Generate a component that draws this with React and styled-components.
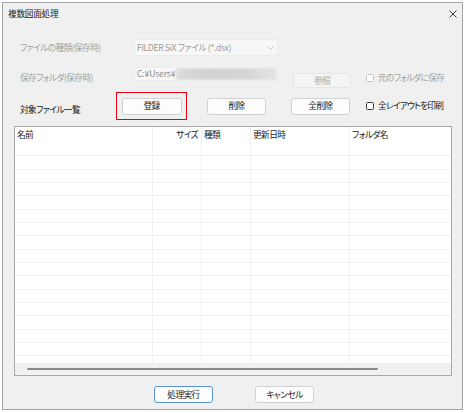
import React from 'react';
import styled, { createGlobalStyle } from 'styled-components';

const GlobalStyle = createGlobalStyle`
  html, body {
    margin: 0;
    padding: 0;
    background: #ffffff;
  }
  * {
    box-sizing: border-box;
  }
`;

const Window = styled.div`
  margin: 2px 0 0 2px;
  width: 461px;
  height: 408px;
  border: 1px solid #a4a4a4;
  background: #f0f0f0;
  display: flex;
  flex-direction: column;
  font-family: 'Noto Sans CJK JP', 'Noto Sans', sans-serif;
  font-feature-settings: 'palt';
  font-size: 8.7px;
  letter-spacing: -0.6px;
  line-height: 12px;
  color: #1a1a1a;
`;

const TitleBar = styled.div`
  height: 22px;
  flex: none;
  display: flex;
  align-items: center;
  justify-content: space-between;
  padding: 0 5px 0 5px;
`;

const Title = styled.span`
  letter-spacing: -0.3px;
  color: #1a1a1a;
`;

const CloseIcon = () => (
  <svg width="8" height="8" viewBox="0 0 8 8">
    <path d="M0.5 0.5 L7.5 7.5 M7.5 0.5 L0.5 7.5" stroke="#3a3a3a" strokeWidth="1" />
  </svg>
);

const FormRow = styled.div`
  display: flex;
  align-items: center;
  height: ${p => p.$h}px;
  margin-top: ${p => p.$mt}px;
  padding-left: 17px;
  flex: none;
`;

const Label = styled.span`
  width: ${p => p.$w}px;
  flex: none;
  color: ${p => (p.$disabled ? '#a3a3a3' : '#1a1a1a')};
  white-space: nowrap;
  align-self: ${p => p.$self || 'center'};
  margin-bottom: ${p => p.$mb || 0}px;
`;

const Select = styled.div`
  width: 144px;
  height: 17px;
  background: #f7f7f7;
  border: 1px solid #ececec;
  display: flex;
  align-items: center;
  justify-content: space-between;
  padding: 0 3px 0 2px;
  color: #9c9c9c;
  letter-spacing: -0.4px;
  white-space: nowrap;
`;

const Chevron = () => (
  <svg width="7" height="4" viewBox="0 0 7 4">
    <path d="M0.5 0.5 L3.5 3.5 L6.5 0.5" stroke="#c2c2c2" strokeWidth="0.9" fill="none" />
  </svg>
);

const PathInput = styled.div`
  width: 144px;
  height: 14px;
  align-self: flex-start;
  background: #f7f7f7;
  border: 1px solid #ececec;
  display: flex;
  align-items: center;
  padding-left: 2px;
  color: #8e8e8e;
  letter-spacing: -0.2px;
  white-space: nowrap;
  overflow: hidden;
`;

const Redacted = styled.span`
  flex: 1;
  height: 12px;
  margin-left: 1px;
  background: linear-gradient(90deg, #dcdcdc, #d3d3d3 30%, #d6d6d6 70%, #e4e4e4);
  filter: blur(0.8px);
`;

const Button = styled.button`
  width: ${p => p.$w}px;
  height: ${p => p.$h || 17}px;
  margin-left: ${p => p.$ml || 0}px;
  align-self: ${p => p.$self || 'center'};
  flex: none;
  padding: 0;
  font: inherit;
  letter-spacing: inherit;
  border-radius: 3px;
  background: ${p => (p.disabled ? '#f4f4f4' : '#fdfdfd')};
  border: 1px solid ${p => (p.$default ? '#5b93d6' : p.disabled ? '#e6e6e6' : '#d2d2d2')};
  color: ${p => (p.disabled ? '#a6a6a6' : '#1a1a1a')};
  display: flex;
  align-items: center;
  justify-content: center;
`;

const Highlight = styled.div`
  width: 71px;
  height: 28px;
  flex: none;
  border: 1px solid #e60012;
  display: flex;
  align-items: center;
  justify-content: center;
`;

const CheckLabel = styled.label`
  display: flex;
  align-items: center;
  gap: 4px;
  margin-left: ${p => p.$ml}px;
  color: ${p => (p.$disabled ? '#a3a3a3' : '#1a1a1a')};
  letter-spacing: -0.75px;
  white-space: nowrap;
`;

const Box = styled.span`
  width: 8px;
  height: 8px;
  flex: none;
  border: 1px solid ${p => (p.$disabled ? '#c6c6c6' : '#3a3a3a')};
  border-radius: 1.5px;
  background: #fdfdfd;
`;

const TableFrame = styled.div`
  margin: 6px 0 0 11px;
  width: 438px;
  height: 250px;
  flex: none;
  border: 1px solid #a8a8a8;
  background: #ffffff;
  display: flex;
  flex-direction: column;
`;

const Rows = styled.div`
  flex: 1;
  overflow: hidden;
`;

const GridRow = styled.div`
  display: grid;
  grid-template-columns: 138px 49px 49px 99px 1fr;
  height: ${p => (p.$header ? '16px' : '13.333px')};
  border-bottom: ${p => (p.$header ? 'none' : '1px solid #f1f1f1')};
`;

const Cell = styled.div`
  border-right: ${p => (p.$last ? 'none' : '1px solid #f1f1f1')};
  text-align: ${p => p.$align || 'left'};
  padding: ${p => (p.$align === 'right' ? '0 3px 0 0' : '0 0 0 2px')};
  line-height: 16px;
  white-space: nowrap;
  overflow: hidden;
`;

const ScrollTrack = styled.div`
  height: 12px;
  flex: none;
  background: #f1f1f1;
  display: flex;
  align-items: center;
  padding-left: 12px;
`;

const ScrollThumb = styled.div`
  width: 351px;
  height: 2px;
  border-radius: 1px;
  background: #888888;
`;

const Footer = styled.div`
  margin-top: 10px;
  padding-left: 3px;
  display: flex;
  justify-content: center;
  gap: 42px;
  flex: none;
`;

const columns = [
  { name: '名前' },
  { name: 'サイズ', align: 'right' },
  { name: '種類' },
  { name: '更新日時' },
  { name: 'フォルダ名' },
];

export default function App() {
  const emptyRows = Array.from({ length: 17 });
  return (
    <>
      <GlobalStyle />
      <Window>
        <TitleBar>
          <Title>複数図面処理</Title>
          <CloseIcon />
        </TitleBar>

        <FormRow $h={17} $mt={14}>
          <Label $w={114} $disabled>ファイルの種類(保存時)</Label>
          <Select>
            <span>FILDER SiX ファイル (*.dsx)</span>
            <Chevron />
          </Select>
        </FormRow>

        <FormRow $h={21} $mt={11}>
          <Label $w={114} $disabled>保存フォルダ(保存時)</Label>
          <PathInput>
            <span>C:¥Users¥</span>
            <Redacted />
          </PathInput>
          <Button $w={58} $h={15} $ml={15} $self="flex-end" disabled>参照</Button>
          <CheckLabel $ml={15} $disabled>
            <Box $disabled />
            元のフォルダに保存
          </CheckLabel>
        </FormRow>

        <FormRow $h={28} $mt={4}>
          <Label $w={96} $self="flex-end" $mb={4}>対象ファイル一覧</Label>
          <Highlight>
            <Button $w={60}>登録</Button>
          </Highlight>
          <Button $w={59} $ml={20}>削除</Button>
          <Button $w={59} $ml={25}>全削除</Button>
          <CheckLabel $ml={16}>
            <Box />
            全レイアウトを印刷
          </CheckLabel>
        </FormRow>

        <TableFrame>
          <Rows>
            <GridRow $header>
              {columns.map((c, i) => (
                <Cell key={c.name} $align={c.align} $last={i === columns.length - 1}>
                  {c.name}
                </Cell>
              ))}
            </GridRow>
            {emptyRows.map((_, r) => (
              <GridRow key={r}>
                {columns.map((c, i) => (
                  <Cell key={c.name} $last={i === columns.length - 1} />
                ))}
              </GridRow>
            ))}
          </Rows>
          <ScrollTrack>
            <ScrollThumb />
          </ScrollTrack>
        </TableFrame>

        <Footer>
          <Button $w={59} $default>処理実行</Button>
          <Button $w={59}>キャンセル</Button>
        </Footer>
      </Window>
    </>
  );
}
